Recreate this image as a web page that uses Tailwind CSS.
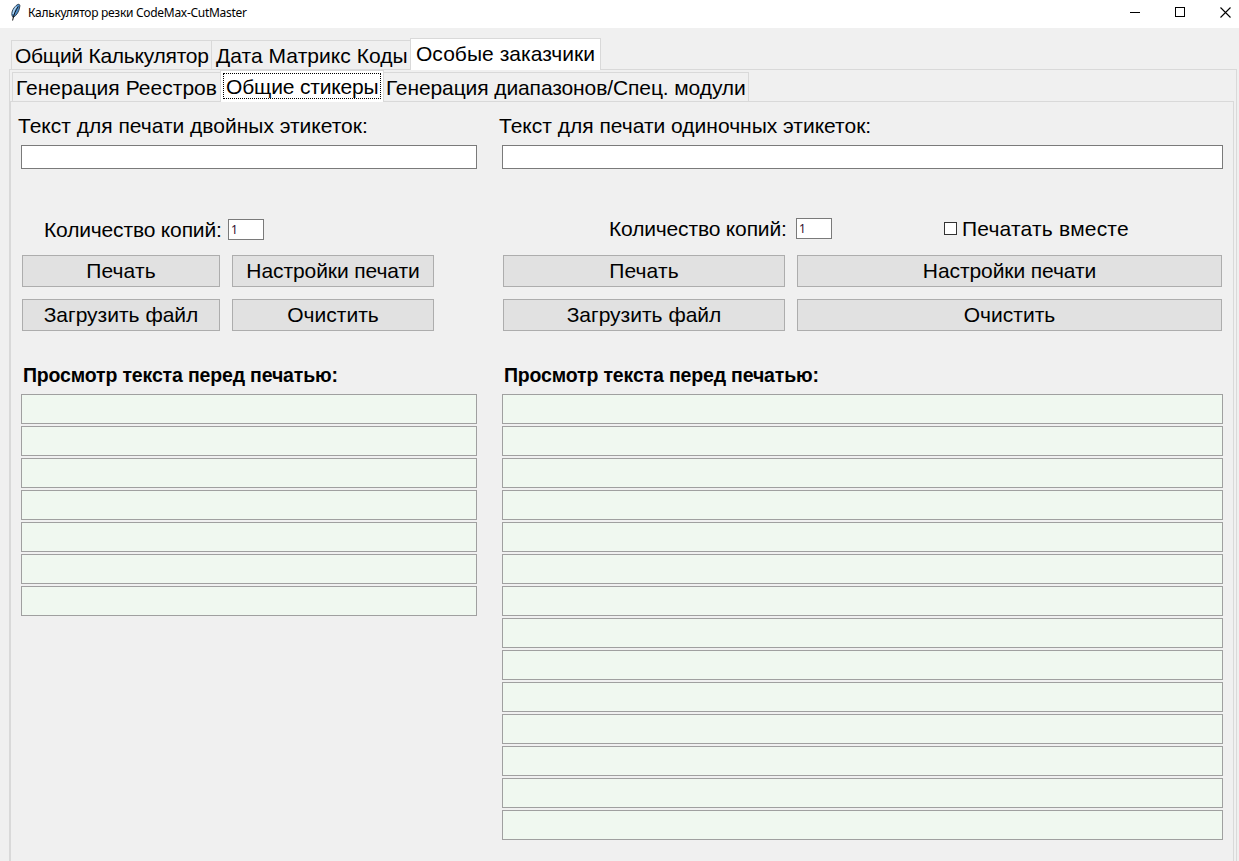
<!DOCTYPE html>
<html lang="ru">
<head>
<meta charset="utf-8">
<title>Калькулятор резки CodeMax-CutMaster</title>
<script src="https://cdn.jsdelivr.net/npm/@tailwindcss/browser@4"></script>
</head>
<body class="w-[1239px] h-[861px] overflow-hidden bg-[#f0f0f0] text-black text-[21px] whitespace-nowrap font-['Liberation_Sans',Arial,sans-serif] flex flex-col">
<header class="h-7 bg-white flex shrink-0 items-center pl-2 pr-2">
  <svg class="w-4 h-5 mr-1 -mt-1" viewBox="0 0 16 20"><path d="M9.500 2.500C11.500 1.800 12.300 3 11.700 5C11 9.500 9 13 5.200 15.500C2.500 13 3.800 6.500 9.500 2.500Z" fill="#4f8fcc" stroke="#263340" stroke-width=".9"/><path d="M8.500 4.500C6.300 7 5.300 9 5 12" fill="none" stroke="#b5d8f2" stroke-width="1.300"/><path d="M10.300 4.500C7.800 8 5.800 12 4.600 18.500" fill="none" stroke="#111" stroke-width="1"/></svg>
  <h1 class="text-[12px] leading-5 tracking-[-0.29px] font-['Noto_Sans','Open_Sans',sans-serif] -mt-[3px]"><span>Калькулятор резки CodeMax-CutMaster</span></h1>
  <div class="ml-auto flex items-center gap-[35px] -mt-1">
    <svg class="w-[10px] h-3" viewBox="0 0 10 12" shape-rendering="crispEdges"><path d="M0 6.500H10" stroke="#000"/></svg>
    <svg class="w-[10px] h-[10px]" viewBox="0 0 10 10" shape-rendering="crispEdges"><path d="M.5 .5H9.500V9.500H.5Z" fill="none" stroke="#000"/></svg>
    <svg class="w-[11px] h-[11px]" viewBox="0 0 11 11"><path d="M.5 .5L10.500 10.500M10.500 .5L.5 10.500" stroke="#000" stroke-width="1.1"/></svg>
  </div>
</header>
<nav class="h-[41px] shrink-0 flex items-end pl-[11px]">
  <div class="w-[200px] h-[29px] border-t border-l border-[#d9d9d9] pl-[3px] leading-[30px] tracking-[-0.25px]"><span>Общий Калькулятор</span></div>
  <div class="w-[199px] h-[29px] border-t border-l border-[#d9d9d9] pl-1 leading-[30px] tracking-[0.05px]"><span>Дата Матрикс Коды</span></div>
  <div class="w-[191px] h-8 -mb-px z-10 bg-white border-t border-x border-[#d9d9d9] pl-[5px] leading-[30px] tracking-[0.04px]"><span>Особые заказчики</span></div>
</nav>
<div class="grow ml-[9px] w-[1228px] border-t border-x border-[#d9d9d9] flex flex-col">
  <nav class="h-[31px] shrink-0 flex items-end pl-[2px]">
    <div class="w-[208px] h-[29px] border-t border-l border-[#d9d9d9] pl-[3px] leading-[30px] tracking-[0.04px]"><span>Генерация Реестров</span></div>
    <div class="w-[164px] h-8 -mb-px z-10 bg-white border-t border-x border-[#d9d9d9] pl-[2px] pt-[2px]">
      <div class="w-[158px] h-[26px] border border-dotted border-black pl-[2px] leading-[25px] tracking-[-0.16px]"><span>Общие стикеры</span></div>
    </div>
    <div class="w-[365px] h-[29px] border-t border-r border-[#d9d9d9] pl-[2px] leading-[30px] tracking-[-0.1px]"><span>Генерация диапазонов/Спец. модули</span></div>
  </nav>
  <main class="grow w-[1224px] border-t border-x border-[#d9d9d9] flex pl-[10px] gap-[25px]">
    <section class="w-[456px]">
      <h2 class="h-[43px] pt-[9px] leading-[30px] -ml-[3px]"><span>Текст для печати двойных этикеток:</span></h2>
      <div class="h-6 bg-white border border-[#7a7a7a]"></div>
      <div class="h-[86px] pt-[50px] pl-[23px] flex items-start">
        <label class="w-[184px] leading-[22px] tracking-[-0.16px]"><span>Количество копий:</span></label>
        <div class="w-9 h-[21px] bg-white border border-[#7a7a7a] pl-[2px] text-[12px] leading-[19px] font-['Noto_Sans',sans-serif] text-[#301030]">1</div>
      </div>
      <div class="grid grid-cols-[198px_202px] gap-3 ml-px text-center">
        <button class="h-8 bg-[#e1e1e1] border border-[#adadad] leading-[30px] tracking-[0.15px]"><span>Печать</span></button>
        <button class="h-8 bg-[#e1e1e1] border border-[#adadad] leading-[30px] tracking-[-0.08px]"><span>Настройки печати</span></button>
        <button class="h-8 bg-[#e1e1e1] border border-[#adadad] leading-[30px]"><span>Загрузить файл</span></button>
        <button class="h-8 bg-[#e1e1e1] border border-[#adadad] leading-[30px]"><span>Очистить</span></button>
      </div>
      <h3 class="h-[63px] pt-[29px] pl-[2px] leading-[30px] text-[19.5px] font-bold tracking-[-0.16px]"><span>Просмотр текста перед печатью:</span></h3>
      <div class="grid gap-[2px] auto-rows-[30px] *:bg-[#f0f8f0] *:border *:border-[#a0a0a0]">
        <div></div><div></div><div></div><div></div><div></div><div></div><div></div>
      </div>
    </section>
    <section class="w-[721px]">
      <h2 class="h-[43px] pt-[9px] leading-[30px] -ml-[3px]"><span>Текст для печати одиночных этикеток:</span></h2>
      <div class="h-6 bg-white border border-[#7a7a7a]"></div>
      <div class="h-[86px] pt-[49px] pl-[107px] flex items-start">
        <label class="w-[187px] leading-[22px] tracking-[-0.16px]"><span>Количество копий:</span></label>
        <div class="w-9 h-[21px] bg-white border border-[#7a7a7a] pl-[2px] text-[12px] leading-[19px] font-['Noto_Sans',sans-serif] text-[#301030]">1</div>
        <div class="w-[13px] h-[13px] mt-1 ml-[112px] bg-white border border-[#333]"></div>
        <label class="ml-[5px] leading-[22px] tracking-[0.2px]"><span>Печатать вместе</span></label>
      </div>
      <div class="grid grid-cols-[282px_425px] gap-3 ml-px text-center">
        <button class="h-8 bg-[#e1e1e1] border border-[#adadad] leading-[30px] tracking-[0.15px]"><span>Печать</span></button>
        <button class="h-8 bg-[#e1e1e1] border border-[#adadad] leading-[30px] tracking-[-0.08px]"><span>Настройки печати</span></button>
        <button class="h-8 bg-[#e1e1e1] border border-[#adadad] leading-[30px]"><span>Загрузить файл</span></button>
        <button class="h-8 bg-[#e1e1e1] border border-[#adadad] leading-[30px]"><span>Очистить</span></button>
      </div>
      <h3 class="h-[63px] pt-[29px] pl-[2px] leading-[30px] text-[19.5px] font-bold tracking-[-0.16px]"><span>Просмотр текста перед печатью:</span></h3>
      <div class="grid gap-[2px] auto-rows-[30px] *:bg-[#f0f8f0] *:border *:border-[#a0a0a0]">
        <div></div><div></div><div></div><div></div><div></div><div></div><div></div><div></div><div></div><div></div><div></div><div></div><div></div><div></div>
      </div>
    </section>
  </main>
</div>
</body>
</html>
